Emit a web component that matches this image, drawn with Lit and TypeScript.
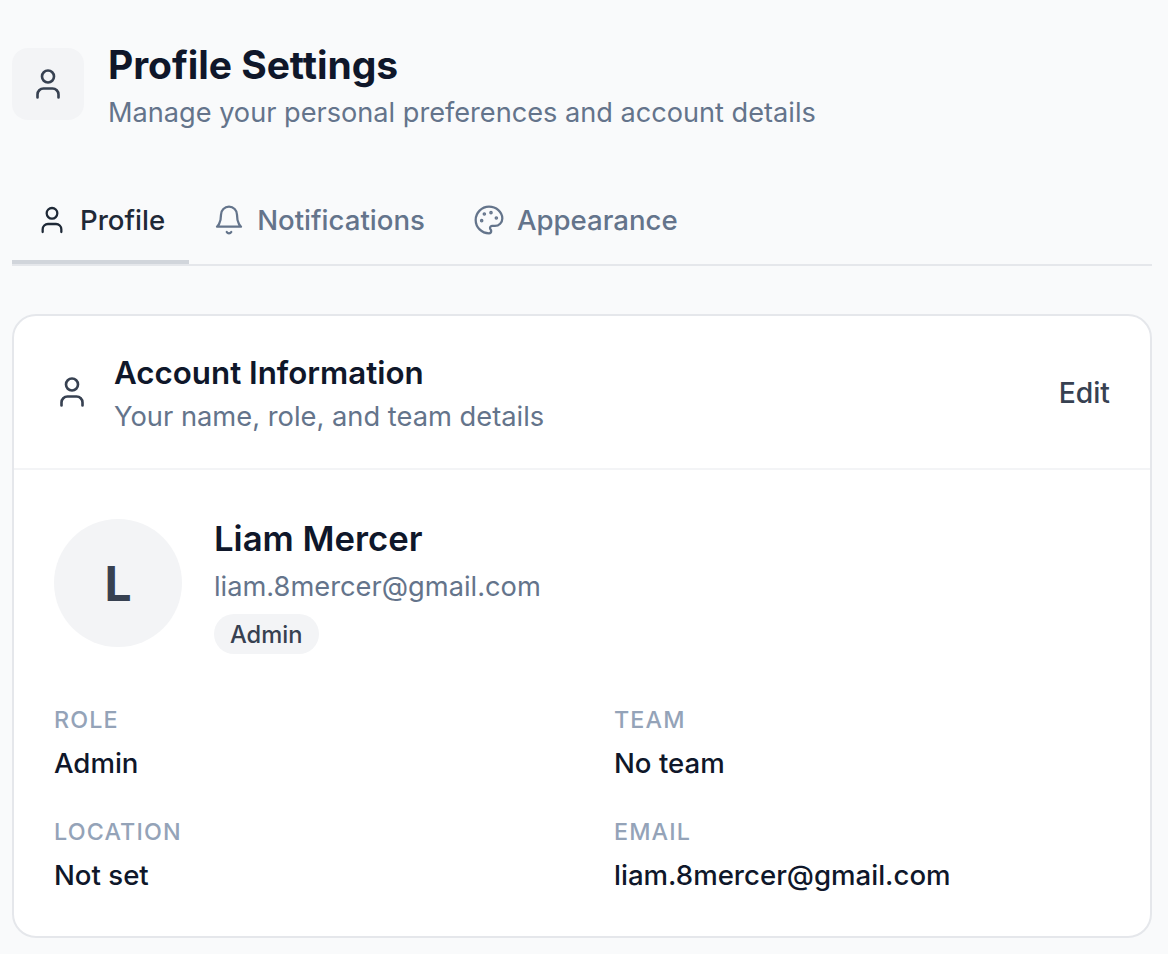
import { LitElement, html, css } from "lit";
import { customElement } from "lit/decorators.js";

const userIcon = (cls: string) => html`<svg class=${cls} viewBox="0 0 24 24" fill="none" stroke="currentColor" stroke-linecap="round" stroke-linejoin="round"><path d="M19 21v-2a4 4 0 0 0-4-4H9a4 4 0 0 0-4 4v2"></path><circle cx="12" cy="7" r="4"></circle></svg>`;
const bellIcon = (cls: string) => html`<svg class=${cls} viewBox="0 0 24 24" fill="none" stroke="currentColor" stroke-linecap="round" stroke-linejoin="round"><path d="M6 8a6 6 0 0 1 12 0c0 7 3 9 3 9H3s3-2 3-9"></path><path d="M10.3 21a1.94 1.94 0 0 0 3.4 0"></path></svg>`;
const paletteIcon = (cls: string) => html`<svg class=${cls} viewBox="0 0 24 24" fill="none" stroke="currentColor" stroke-linecap="round" stroke-linejoin="round"><circle cx="13.5" cy="6.5" r=".5" fill="currentColor"></circle><circle cx="17.5" cy="10.5" r=".5" fill="currentColor"></circle><circle cx="8.5" cy="7.5" r=".5" fill="currentColor"></circle><circle cx="6.5" cy="12.5" r=".5" fill="currentColor"></circle><path d="M12 2C6.5 2 2 6.5 2 12s4.5 10 10 10c.926 0 1.648-.746 1.648-1.688 0-.437-.18-.835-.437-1.125-.29-.289-.438-.652-.438-1.125a1.64 1.64 0 0 1 1.668-1.668h1.996c3.051 0 5.555-2.503 5.555-5.554C21.965 6.012 17.461 2 12 2z"></path></svg>`;

@customElement("app-root")
export class AppRoot extends LitElement {
  static styles = css`
    :host { display: block; min-height: 954px; background: #f9fafb; font-family: Inter, "Noto Sans", sans-serif; box-sizing: border-box; padding: 48px 16px 0 12px; }
    * { box-sizing: border-box; }
    .head { display: flex; gap: 24px; align-items: flex-start; }
    .head-icon { width: 72px; height: 72px; border-radius: 16px; background: #f3f4f6; color: #374151; display: flex; align-items: center; justify-content: center; }
    .i36 { width: 36px; height: 36px; display: block; flex: none; stroke-width: 1.75; }
    .i32 { width: 32px; height: 32px; display: block; flex: none; stroke-width: 1.7; }
    h1 { margin: 0; font-size: 39px; line-height: 34px; font-weight: 700; letter-spacing: -0.05px; color: #0f172a; }
    .sub { margin: 11px 0 0; font-size: 27.15px; line-height: 40px; color: #64748b; }
    .tabs { display: flex; margin-top: 47px; border-bottom: 2px solid #e5e7eb; }
    .tab { display: flex; align-items: center; gap: 12px; height: 84px; padding: 0 24px; font-size: 27.6px; font-weight: 500; color: #64748b; border-bottom: 4px solid transparent; }
    .tab.active { color: #1f2937; border-bottom-color: #d1d5db; }
    .card { margin-top: 48px; background: #fff; border: 2px solid #e5e7eb; border-radius: 24px; overflow: hidden; }
    .card-head { display: flex; align-items: center; gap: 24px; height: 154px; padding: 0 40px; border-bottom: 2px solid #f3f4f6; }
    .card-title { font-size: 31.3px; line-height: 40px; font-weight: 600; color: #0f172a; }
    .card-sub { font-size: 27.3px; line-height: 40px; color: #64748b; margin-top: 4px; }
    .card-head .i36 { color: #374151; }
    .grow { flex: 1; padding-top: 5px; }
    .edit { font-size: 28.3px; font-weight: 500; color: #374151; padding-top: 2px; }
    .body { padding: 49px 40px 41px; }
    .who { display: flex; gap: 32px; }
    .avatar { width: 128px; height: 128px; border-radius: 50%; background: #f3f4f6; color: #374151; font-size: 48px; font-weight: 700; display: flex; align-items: center; justify-content: center; }
    .name { font-size: 34.7px; line-height: 40px; font-weight: 600; color: #0f172a; margin-top: -1px; }
    .mail { font-size: 27.25px; line-height: 40px; color: #64748b; margin-top: 9px; }
    .badge { display: inline-block; margin-top: 7px; padding: 0 16px; height: 40px; line-height: 42px; border-radius: 20px; background: #f3f4f6; color: #374151; font-size: 23.7px; font-weight: 500; }
    .grid { display: grid; grid-template-columns: 1fr 1fr; column-gap: 64px; row-gap: 33px; margin-top: 50px; }
    .label { font-size: 23.3px; line-height: 32px; font-weight: 500; letter-spacing: 1.15px; color: #94a3b8; text-transform: uppercase; }
    .value { font-size: 27.6px; line-height: 40px; font-weight: 450; color: #0f172a; margin-top: 7px; }
  `;

  render() {
    const fields = [
      ["Role", "Admin"],
      ["Team", "No team"],
      ["Location", "Not set"],
      ["Email", "liam.8mercer@gmail.com"],
    ];
    return html`
      <div class="head">
        <div class="head-icon">${userIcon("i36")}</div>
        <div class="head-text">
          <h1>Profile Settings</h1>
          <p class="sub">Manage your personal preferences and account details</p>
        </div>
      </div>
      <div class="tabs">
        <div class="tab active">${userIcon("i32")}Profile</div>
        <div class="tab">${bellIcon("i32")}Notifications</div>
        <div class="tab">${paletteIcon("i32")}Appearance</div>
      </div>
      <div class="card">
        <div class="card-head">
          ${userIcon("i36")}
          <div class="grow">
            <div class="card-title">Account Information</div>
            <div class="card-sub">Your name, role, and team details</div>
          </div>
          <div class="edit">Edit</div>
        </div>
        <div class="body">
          <div class="who">
            <div class="avatar">L</div>
            <div>
              <div class="name">Liam Mercer</div>
              <div class="mail">liam.8mercer@gmail.com</div>
              <div class="badge">Admin</div>
            </div>
          </div>
          <div class="grid">
            ${fields.map(([l, v]) => html`<div><div class="label">${l}</div><div class="value">${v}</div></div>`)}
          </div>
        </div>
      </div>
    `;
  }
}
